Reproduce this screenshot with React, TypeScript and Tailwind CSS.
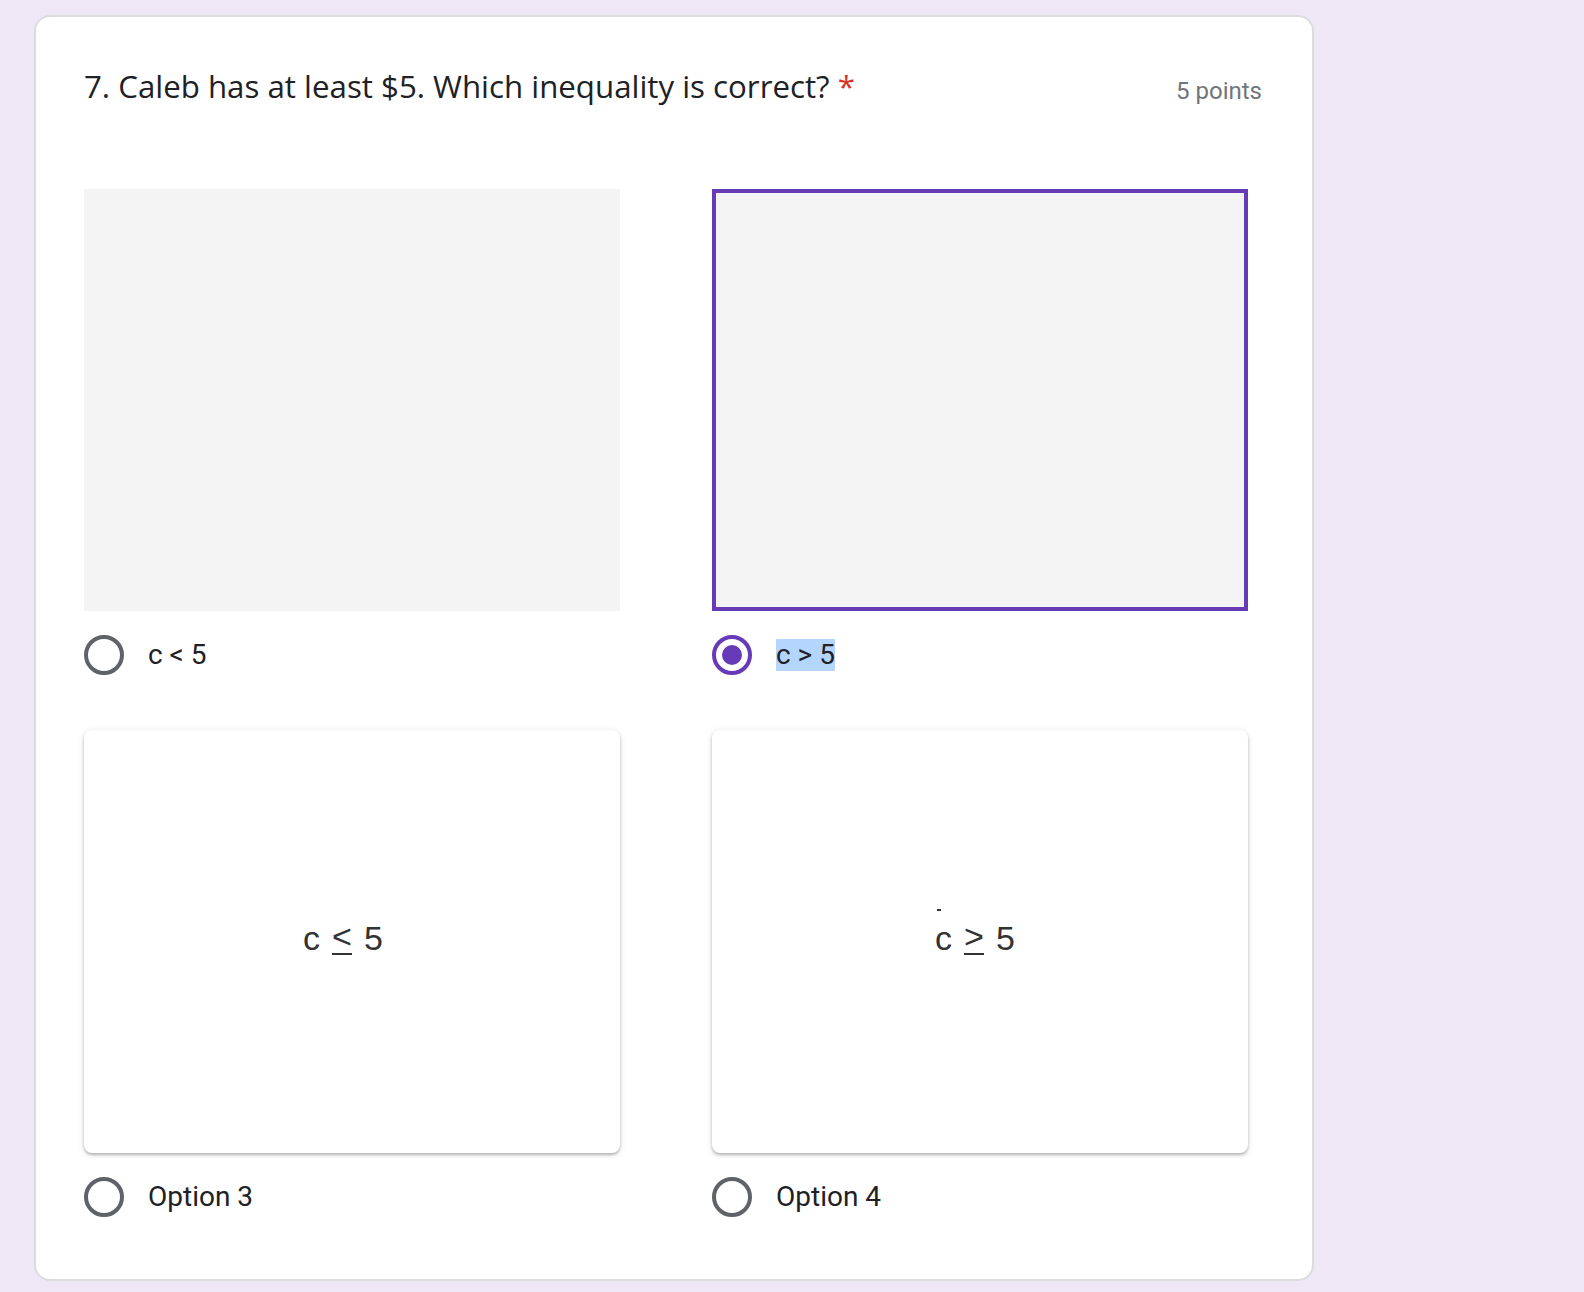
import React from "react";

type Opt = {
  label: string;
  kind: "blank" | "selected" | "img";
  sign?: string;
  dash?: boolean;
  shift?: string;
};

const options: Opt[] = [
  { label: "c < 5", kind: "blank" },
  { label: "c > 5", kind: "selected" },
  { label: "Option 3", kind: "img", sign: "<", shift: "mr-[18px]" },
  { label: "Option 4", kind: "img", sign: ">", dash: true, shift: "mr-[10px]" },
];

function Radio({ checked }: { checked: boolean }) {
  if (checked) {
    return (
      <span className="flex h-10 w-10 shrink-0 items-center justify-center rounded-full border-[4px] border-[#673ab7]">
        <span className="h-5 w-5 rounded-full bg-[#673ab7]" />
      </span>
    );
  }
  return <span className="h-10 w-10 shrink-0 rounded-full border-[4px] border-[#5f6368]" />;
}

// picture of an inequality: the sign sits over a short bar, like the scanned image
function Inequality({ sign, dash }: { sign: string; dash?: boolean }) {
  return (
    <div className="relative flex items-end gap-[12px] font-['Liberation_Sans',Arial,sans-serif] text-[34px] leading-none text-[#333]">
      {dash && <span className="absolute left-[2px] top-[-12px] h-[2px] w-[4px] bg-[#333]" />}
      <span>c</span>
      <span className="flex flex-col items-center">
        <span className="leading-[30px]">{sign}</span>
        <span className="mt-[2px] h-[2px] w-[20px] bg-[#333]" />
      </span>
      <span>5</span>
    </div>
  );
}

function OptionCard({ opt }: { opt: Opt }) {
  const selected = opt.kind === "selected";
  return (
    <div className="flex w-[536px] flex-col">
      {opt.kind === "blank" && <div className="h-[422px] w-full bg-[#f4f4f4]" />}
      {selected && <div className="h-[422px] w-full border-[4px] border-[#673ab7] bg-[#f4f4f4]" />}
      {opt.kind === "img" && (
        <div className="flex h-[423px] w-full items-center justify-center rounded-[8px] bg-white shadow-[0_2px_3px_rgba(0,0,0,0.25),0_1px_6px_1px_rgba(0,0,0,0.08)]">
          <div className={"mb-[8px] " + (opt.shift ?? "")}>
            <Inequality sign={opt.sign ?? "<"} dash={opt.dash} />
          </div>
        </div>
      )}
      <div className="mt-[24px] flex items-center gap-[24px]">
        <Radio checked={selected} />
        <span
          className={
            "font-['Roboto',sans-serif] text-[28px] leading-[32px] text-[#202124] " +
            (selected ? "bg-[#b4d5fe]" : "")
          }
        >
          {opt.label}
        </span>
      </div>
    </div>
  );
}

export default function App() {
  return (
    <div className="min-h-[1292px] w-full bg-[#ede7f6] pt-[15px] pl-[34px] pb-[12px]">
      <div className="w-[1280px] rounded-[16px] border-2 border-[#dadce0] bg-white px-[48px] pt-[44px] pb-[62px]">
        <div className="flex items-start justify-between">
          <h1 className="font-['Open_Sans',sans-serif] text-[31.25px] leading-[50px] text-[#202124]">
            7. Caleb has at least $5. Which inequality is correct?{" "}
            <span className="text-[#d93025]">*</span>
          </h1>
          <span className="mt-[12px] mr-[2px] font-['Roboto',sans-serif] text-[24px] text-[#70757a]">5 points</span>
        </div>
        <div className="mt-[78px] grid grid-cols-[536px_536px] gap-x-[92px] gap-y-[55px]">
          {options.map((o) => (
            <OptionCard key={o.label} opt={o} />
          ))}
        </div>
      </div>
    </div>
  );
}
